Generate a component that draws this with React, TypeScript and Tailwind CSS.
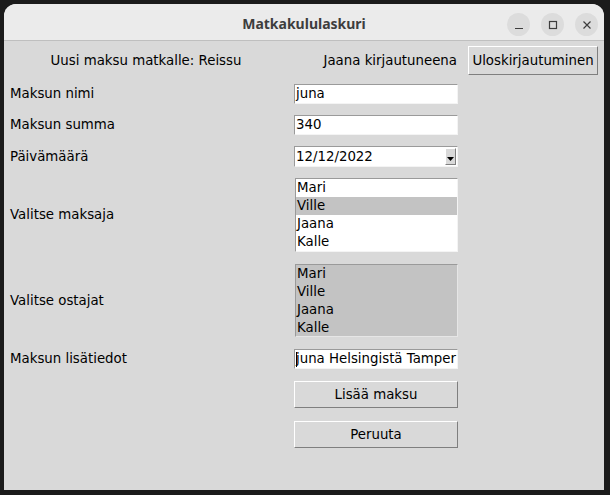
import React from 'react';

const persons = ['Mari', 'Ville', 'Jaana', 'Kalle'];

function Entry({ value, cursor }: { value: string; cursor?: boolean }) {
  return (
    <div className="relative w-[164px] h-[20px] bg-white border border-t-[#9a9a9a] border-l-[#9a9a9a] border-r-[#f4f4f4] border-b-[#f4f4f4] overflow-hidden whitespace-nowrap pl-[1px] leading-[18px] text-[13.33px]">
      {cursor && <span className="absolute left-[1px] top-[2px] w-[1px] h-[15px] bg-black" />}
      {value}
    </div>
  );
}

function TkButton({ label, className }: { label: string; className?: string }) {
  return (
    <div
      className={`h-[27px] flex items-center justify-center bg-[#d9d9d9] border border-t-white border-l-white border-r-[#7f7f7f] border-b-[#7f7f7f] text-[13.33px] ${className ?? ''}`}
    >
      {label}
    </div>
  );
}

function Row({ label, children, className }: { label: string; children: React.ReactNode; className?: string }) {
  return (
    <div className={`flex items-center ${className ?? ''}`}>
      <div className="w-[290px] pl-[6px] text-[13.33px]">{label}</div>
      {children}
    </div>
  );
}

export default function App() {
  return (
    <div className="w-[610px] h-[495px] bg-[#1b1b1b] pt-[4px] pl-[4px] font-['DejaVu_Sans',sans-serif] text-black">
      <div className="w-[600px] h-[486px] rounded-t-[12px] overflow-hidden bg-[#d9d9d9] flex flex-col">
        {/* title bar */}
        <div className="relative h-[37px] bg-[#ebebeb] border-b border-[#bfbfbf] flex items-center justify-center shrink-0">
          <span className="font-['Noto_Sans',sans-serif] font-bold text-[14px] text-[#3d3d3d] mt-[3px]">Matkakululaskuri</span>
          <div className="absolute right-[6px] top-[9px] flex gap-[11px]">
            <div className="w-[23px] h-[23px] rounded-full bg-[#dcdcdc] flex items-center justify-center">
              <svg width="10" height="10" viewBox="0 0 10 10"><path d="M1 8.5h8" stroke="#3d3d3d" strokeWidth="1.2" /></svg>
            </div>
            <div className="w-[23px] h-[23px] rounded-full bg-[#dcdcdc] flex items-center justify-center">
              <svg width="10" height="10" viewBox="0 0 10 10"><rect x="1.5" y="1.5" width="7" height="7" fill="none" stroke="#3d3d3d" strokeWidth="1.2" /></svg>
            </div>
            <div className="w-[23px] h-[23px] rounded-full bg-[#dcdcdc] flex items-center justify-center">
              <svg width="10" height="10" viewBox="0 0 10 10"><path d="M1.5 1.5l7 7M8.5 1.5l-7 7" stroke="#3d3d3d" strokeWidth="1.2" /></svg>
            </div>
          </div>
        </div>

        {/* header */}
        <div className="flex items-center mt-[5px] h-[29px] text-[13.33px]">
          <div className="w-[284px] text-center">Uusi maksu matkalle: Reissu</div>
          <div className="flex-1 text-right">Jaana kirjautuneena</div>
          <TkButton label="Uloskirjautuminen" className="h-[29px] w-[130px] ml-[11px] mr-[6px]" />
        </div>

        <Row label="Maksun nimi" className="mt-[9px] h-[20px]">
          <Entry value="juna" />
        </Row>
        <Row label="Maksun summa" className="mt-[11px] h-[20px]">
          <Entry value="340" />
        </Row>
        <Row label="Päivämäärä" className="mt-[11px] h-[21px]">
          <div className="relative w-[164px] h-[21px] bg-white border border-t-[#9a9a9a] border-l-[#9a9a9a] border-r-[#f4f4f4] border-b-[#f4f4f4] pl-[1px] leading-[19px] text-[13.33px]">
            12/12/2022
            <div className="absolute right-[1px] top-[1px] w-[11px] h-[17px] bg-[#d9d9d9] border border-t-white border-l-white border-r-[#7f7f7f] border-b-[#7f7f7f] flex items-end justify-center pb-[3px]">
              <svg width="7" height="4" viewBox="0 0 7 4"><path d="M0 0h7L3.5 4z" fill="#000" /></svg>
            </div>
          </div>
        </Row>
        <Row label="Valitse maksaja" className="mt-[11px] h-[74px]">
          <div className="w-[163px] h-[74px] ml-[1px] bg-white border border-t-[#9a9a9a] border-l-[#9a9a9a] border-r-[#f4f4f4] border-b-[#f4f4f4] text-[13.33px]">
            {persons.map((p) => (
              <div key={p} className={`h-[18px] leading-[18px] pl-[1px] ${p === 'Ville' ? 'bg-[#c3c3c3]' : ''}`}>
                {p}
              </div>
            ))}
          </div>
        </Row>
        <Row label="Valitse ostajat" className="mt-[12px] h-[73px]">
          <div className="w-[163px] h-[73px] ml-[1px] bg-[#c3c3c3] border border-t-[#9a9a9a] border-l-[#9a9a9a] border-r-[#e6e6e6] border-b-[#e6e6e6] text-[13.33px]">
            {persons.map((p) => (
              <div key={p} className="h-[18px] leading-[18px] pl-[1px]">
                {p}
              </div>
            ))}
          </div>
        </Row>
        <Row label="Maksun lisätiedot" className="mt-[12px] h-[20px]">
          <Entry value="juna Helsingistä Tamper" cursor />
        </Row>

        <div className="pl-[290px]">
          <TkButton label="Lisää maksu" className="mt-[12px] w-[164px]" />
          <TkButton label="Peruuta" className="mt-[13px] w-[164px]" />
        </div>
      </div>
    </div>
  );
}
